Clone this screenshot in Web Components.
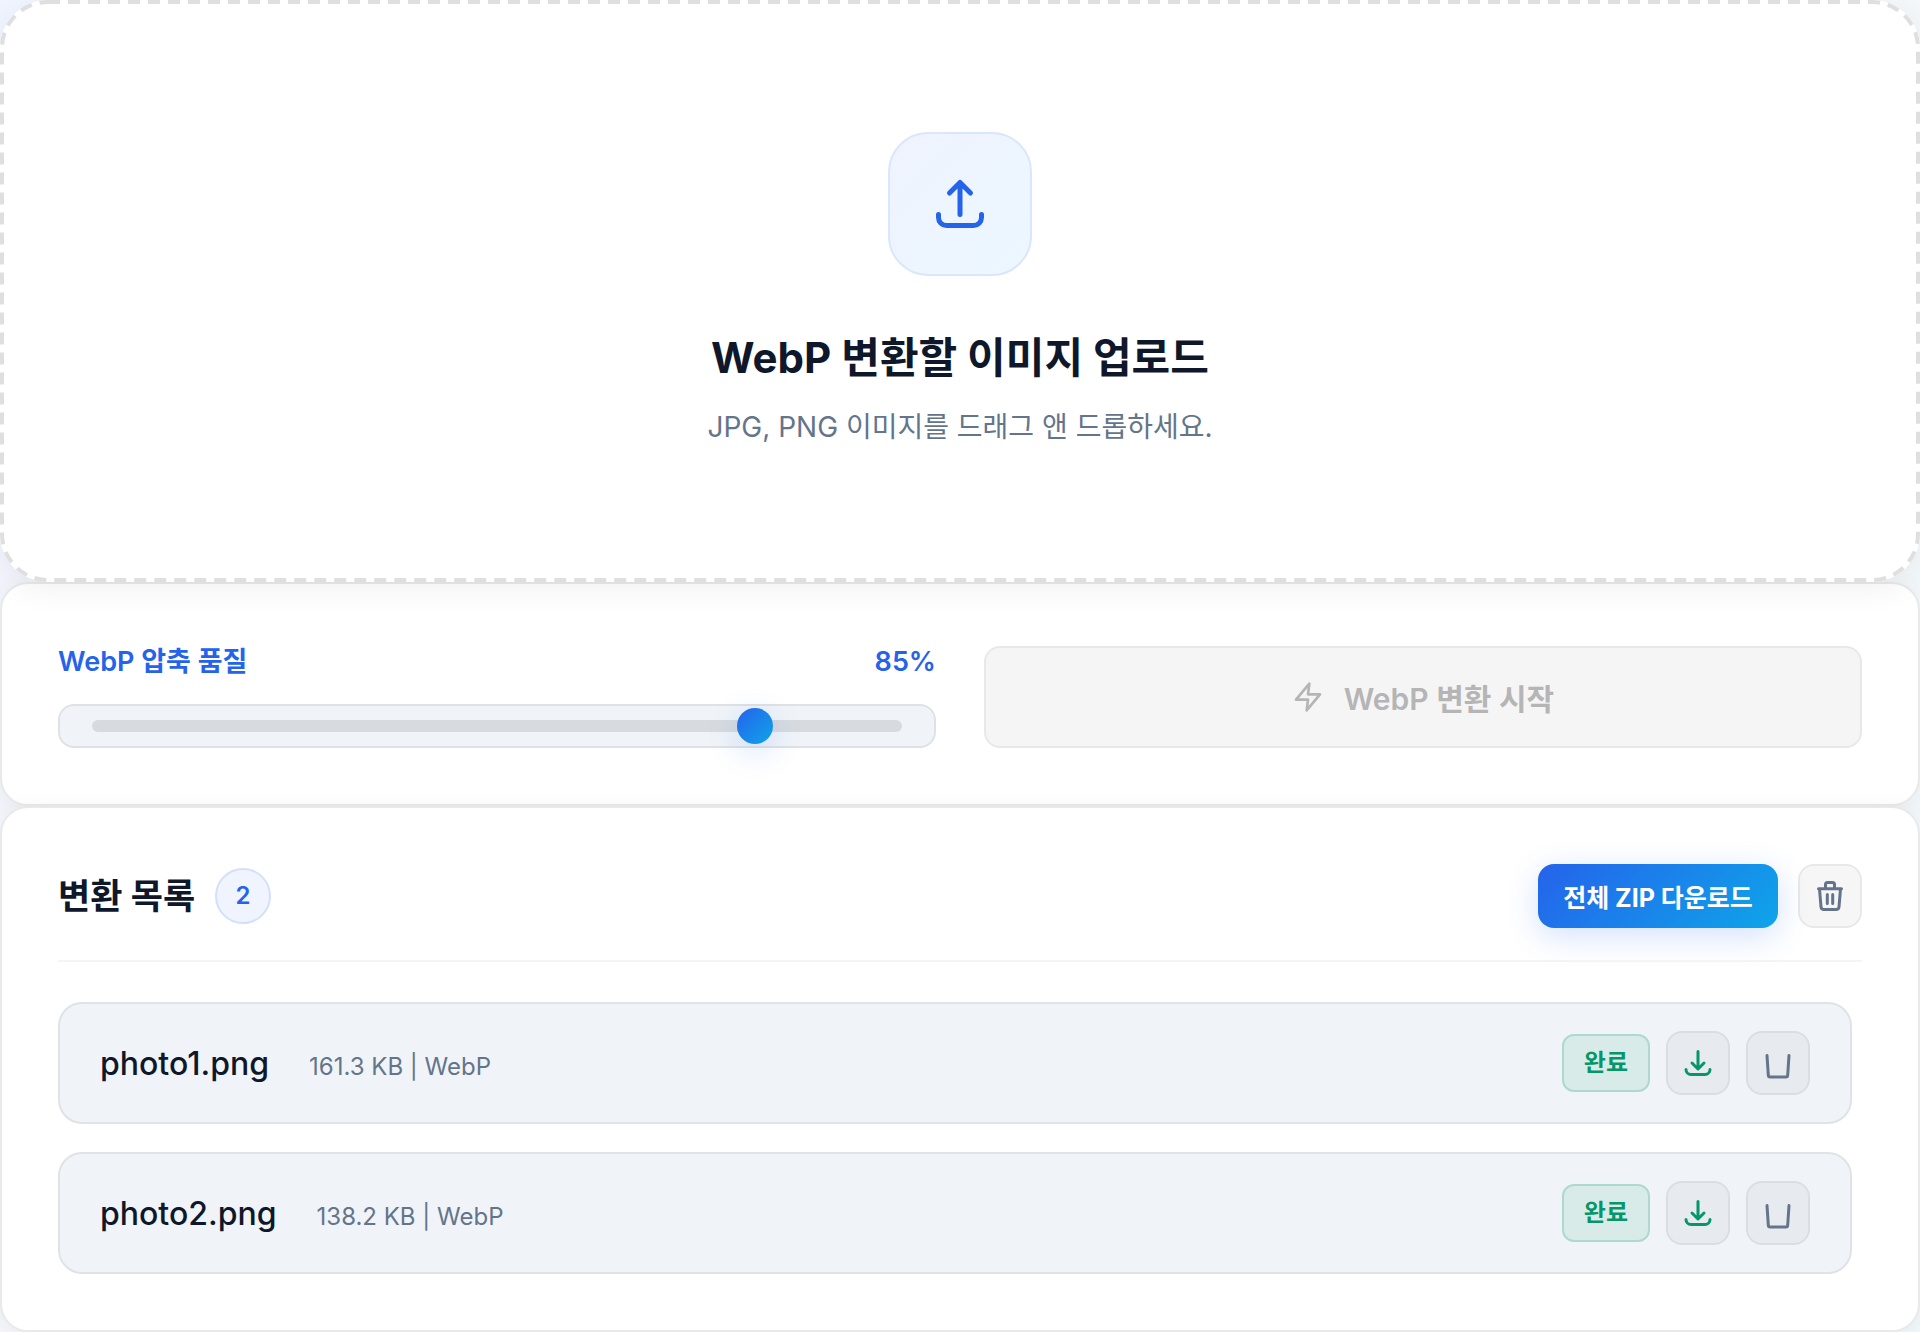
<!DOCTYPE html>
<html lang="ko">
<head>
<meta charset="UTF-8">
<meta name="viewport" content="width=device-width, initial-scale=1">
<title>WebP 변환</title>
<style>
  :root {
    --primary: #2563eb;
    --gradient: linear-gradient(135deg, #2563eb, #0ea5e9);
    --text: #0f172a;
    --muted: #64748b;
    --success: #059669;
    --surface: #f0f4f8;
  }

  body {
    margin: 0;
    min-height: 100vh;
    background: linear-gradient(135deg, #f0f4ff, #f5f7fa 40%, #f0f8fb);
    color: var(--text);
    font-family: Inter, "Noto Sans CJK KR", sans-serif;
  }
</style>
</head>
<body>

<upload-zone>
  <span slot="title">WebP 변환할 이미지 업로드</span>
  <span slot="hint">JPG, PNG 이미지를 드래그 앤 드롭하세요.</span>
</upload-zone>

<panel-card>
  <convert-settings>
    <quality-slider label="WebP 압축 품질" min="10" max="100" value="85"></quality-slider>
    <convert-button>WebP 변환 시작</convert-button>
  </convert-settings>
</panel-card>

<panel-card>
  <file-list label="변환 목록">
    <file-item name="photo1.png" meta="161.3 KB | WebP" status="완료"></file-item>
    <file-item name="photo2.png" meta="138.2 KB | WebP" status="완료"></file-item>
  </file-list>
</panel-card>

<script>
'use strict';

const ICONS = {
  upload: {
    box: 56,
    stroke: 5,
    path: 'M28 38.5v-32M17.5 17 28 6.5 38.5 17M6.5 38.5v3a8 8 0 0 0 8 8h27a8 8 0 0 0 8-8v-3'
  },
  zap: {
    box: 24,
    stroke: 2,
    path: 'M13 2 3 14h9l-1 8 10-12h-9z'
  },
  download: {
    box: 32,
    stroke: 3,
    path: 'M16 4.5v17M10 16l6 6 6-6M4 22.5a5 5 0 0 0 5 5h14a5 5 0 0 0 5-5'
  },
  trash: {
    box: 32,
    stroke: 3,
    path: 'M4.5 8.7h23M11.5 8.5v-4a2 2 0 0 1 2-2h5a2 2 0 0 1 2 2v4M5.5 9 7 26.8a3 3 0 0 0 3 2.7h12a3 3 0 0 0 3-2.7L26.5 9M13.3 14.5v9M18.7 14.5v9'
  },
  bin: {
    box: 32,
    stroke: 3,
    path: 'M5 8.5 6.3 28a2 2 0 0 0 2 2h15.4a2 2 0 0 0 2-2L27 8.5'
  }
};

class AppIcon extends HTMLElement {

  connectedCallback() {
    let icon = ICONS[this.getAttribute('name')];
    let size = this.getAttribute('size') || 32;

    this.attachShadow({mode: 'open'});
    this.shadowRoot.innerHTML = `
      <style>
        :host {
          display: block;
          flex: none;
        }

        svg {
          display: block;
          fill: none;
          stroke: currentColor;
          stroke-linecap: round;
          stroke-linejoin: round;
        }
      </style>
      <svg width="${size}" height="${size}" viewBox="0 0 ${icon.box} ${icon.box}" stroke-width="${icon.stroke}" aria-hidden="true">
        <path d="${icon.path}"/>
      </svg>
    `;
  }

}

class UploadZone extends HTMLElement {

  constructor() {
    super();
    this.attachShadow({mode: 'open'});
    this.shadowRoot.innerHTML = `
      <style>
        /* sits above the next card so the shadow falls onto it */
        :host {
          position: relative;
          z-index: 1;
          display: flex;
          flex-direction: column;
          align-items: center;
          padding: 132px 32px;
          border-radius: 48px;
          background: #fff;
          box-shadow: 0 8px 32px rgba(0, 0, 0, 0.06);
          text-align: center;
        }

        /* dashed outline with longer dashes than border-style gives */
        .outline {
          position: absolute;
          inset: 0;
          width: 100%;
          height: 100%;
          pointer-events: none;
        }

        .outline rect {
          x: 2px;
          y: 2px;
          width: calc(100% - 4px);
          height: calc(100% - 4px);
          rx: 46px;
          fill: none;
          stroke: #dfdfdf;
          stroke-width: 4px;
          stroke-dasharray: 12 8;
        }

        .badge {
          display: grid;
          place-items: center;
          box-sizing: border-box;
          width: 144px;
          height: 144px;
          margin-bottom: 48px;
          border: 2px solid #dae6fb;
          border-radius: 40px;
          background: linear-gradient(135deg, #eff3fd, #ecf7ff);
          color: var(--primary);
        }

        h2 {
          margin: 0 0 12px;
          font-size: 42px;
          font-weight: 700;
          line-height: 68px;
        }

        p {
          margin: 0;
          color: var(--muted);
          font-size: 28px;
          line-height: 46px;
        }
      </style>
      <svg class="outline" aria-hidden="true"><rect/></svg>
      <div class="badge"><app-icon name="upload" size="56"></app-icon></div>
      <h2><slot name="title"></slot></h2>
      <p><slot name="hint"></slot></p>
    `;
  }

}

class PanelCard extends HTMLElement {

  constructor() {
    super();
    this.attachShadow({mode: 'open'});
    this.shadowRoot.innerHTML = `
      <style>
        :host {
          position: relative;
          display: block;
          padding: 56px;
          border: 2px solid #e9e9e9;
          border-radius: 28px;
          background: #fff;
          box-shadow: 0 4px 24px rgba(0, 0, 0, 0.06);
        }
      </style>
      <slot></slot>
    `;
  }

}

class ConvertSettings extends HTMLElement {

  constructor() {
    super();
    this.attachShadow({mode: 'open'});
    this.shadowRoot.innerHTML = `
      <style>
        :host {
          display: grid;
          grid-template-columns: 1fr 1fr;
          align-items: end;
          gap: 48px;
        }
      </style>
      <slot></slot>
    `;
  }

}

class QualitySlider extends HTMLElement {

  connectedCallback() {
    let value = this.getAttribute('value') || 85;
    let min = this.getAttribute('min') || 0;
    let max = this.getAttribute('max') || 100;

    this.attachShadow({mode: 'open'});
    this.shadowRoot.innerHTML = `
      <style>
        :host {
          display: block;
        }

        .head {
          display: flex;
          justify-content: space-between;
          margin-bottom: 20px;
          color: var(--primary);
          font-size: 27px;
          font-weight: 600;
          line-height: 44px;
        }

        input {
          -webkit-appearance: none;
          appearance: none;
          display: block;
          box-sizing: border-box;
          width: 100%;
          height: 44px;
          margin: 0;
          padding: 0 32px;
          border: 2px solid #dfe2e4;
          border-radius: 16px;
          background: var(--surface);
        }

        input::-webkit-slider-runnable-track {
          height: 12px;
          border-radius: 6px;
          background: #d7dbdf;
        }

        input::-webkit-slider-thumb {
          -webkit-appearance: none;
          width: 36px;
          height: 36px;
          margin-top: -12px;
          border-radius: 50%;
          background: var(--gradient);
          box-shadow: 0 8px 32px rgba(37, 99, 235, 0.2);
        }
      </style>
      <div class="head">
        <label for="quality">${this.getAttribute('label')}</label>
        <output for="quality">${value}%</output>
      </div>
      <input type="range" id="quality" min="${min}" max="${max}" value="${value}">
    `;

    let input = this.shadowRoot.querySelector('input');
    let output = this.shadowRoot.querySelector('output');

    input.oninput = () => {
      output.textContent = input.value + '%';
    };
  }

}

class ConvertButton extends HTMLElement {

  constructor() {
    super();
    this.attachShadow({mode: 'open'});
    this.shadowRoot.innerHTML = `
      <style>
        :host {
          display: block;
        }

        button {
          display: flex;
          align-items: center;
          justify-content: center;
          gap: 20px;
          box-sizing: border-box;
          width: 100%;
          height: 102px;
          border: 2px solid #e8e8e8;
          border-radius: 16px;
          background: #f5f5f5;
          color: #b5b5b5;
          font: inherit;
          font-size: 30px;
          font-weight: 600;
        }
      </style>
      <button type="button" disabled>
        <app-icon name="zap"></app-icon>
        <span><slot></slot></span>
      </button>
    `;
  }

}

class IconButton extends HTMLElement {

  connectedCallback() {
    this.attachShadow({mode: 'open'});
    this.shadowRoot.innerHTML = `
      <style>
        :host {
          display: block;
          flex: none;
          color: var(--muted);
        }

        button {
          display: grid;
          place-items: center;
          width: 64px;
          height: 64px;
          padding: 0;
          border: 2px solid rgba(0, 0, 0, 0.06);
          border-radius: 16px;
          background: rgba(0, 0, 0, 0.035);
          color: inherit;
          cursor: pointer;
        }
      </style>
      <button type="button" aria-label="${this.getAttribute('label')}">
        <app-icon name="${this.getAttribute('icon')}"></app-icon>
      </button>
    `;
  }

}

class FileList extends HTMLElement {

  connectedCallback() {
    this.attachShadow({mode: 'open'});
    this.shadowRoot.innerHTML = `
      <style>
        :host {
          display: block;
        }

        header {
          display: flex;
          align-items: center;
          justify-content: space-between;
          margin-bottom: 40px;
          padding-bottom: 32px;
          border-bottom: 2px solid #f5f5f5;
        }

        .group {
          display: flex;
          align-items: center;
          gap: 20px;
        }

        h3 {
          margin: 0;
          font-size: 35px;
          font-weight: 700;
          line-height: 56px;
        }

        .count {
          box-sizing: border-box;
          width: 56px;
          height: 56px;
          border: 2px solid #d3e0fb;
          border-radius: 50%;
          background: #eff4fe;
          color: var(--primary);
          font-size: 24px;
          font-weight: 600;
          line-height: 52px;
          text-align: center;
        }

        .zip {
          min-width: 240px;
          height: 64px;
          padding: 0 24px;
          border: 0;
          border-radius: 16px;
          background: var(--gradient);
          box-shadow: 0 8px 32px rgba(37, 99, 235, 0.2);
          color: #fff;
          font: inherit;
          font-size: 25px;
          font-weight: 700;
          cursor: pointer;
        }

        .items {
          display: flex;
          flex-direction: column;
          gap: 28px;
          padding-right: 10px;
        }
      </style>
      <header>
        <div class="group">
          <h3>${this.getAttribute('label')}</h3>
          <span class="count">${this.querySelectorAll('file-item').length}</span>
        </div>
        <div class="group">
          <button type="button" class="zip">전체 ZIP 다운로드</button>
          <icon-button icon="trash" label="전체 삭제"></icon-button>
        </div>
      </header>
      <div class="items"><slot></slot></div>
    `;
  }

}

class FileItem extends HTMLElement {

  connectedCallback() {
    this.attachShadow({mode: 'open'});
    this.shadowRoot.innerHTML = `
      <style>
        :host {
          display: flex;
          align-items: center;
          justify-content: space-between;
          padding: 27px 40px;
          border: 2px solid #dfe3e5;
          border-radius: 24px;
          background: var(--surface);
        }

        .info {
          display: flex;
          align-items: baseline;
          gap: 40px;
        }

        .name {
          font-size: 32px;
          font-weight: 500;
        }

        .meta {
          color: var(--muted);
          font-size: 24px;
        }

        .actions {
          display: flex;
          align-items: center;
          gap: 16px;
        }

        .status {
          padding: 0 20px;
          border: 2px solid #addace;
          border-radius: 12px;
          background: #d9ebe9;
          color: var(--success);
          font-size: 24px;
          font-weight: 700;
          line-height: 54px;
        }

        .download {
          color: var(--success);
        }
      </style>
      <div class="info">
        <span class="name">${this.getAttribute('name')}</span>
        <span class="meta">${this.getAttribute('meta')}</span>
      </div>
      <div class="actions">
        <span class="status">${this.getAttribute('status')}</span>
        <icon-button class="download" icon="download" label="다운로드"></icon-button>
        <icon-button icon="bin" label="삭제"></icon-button>
      </div>
    `;
  }

}

customElements.define('app-icon', AppIcon);
customElements.define('icon-button', IconButton);
customElements.define('upload-zone', UploadZone);
customElements.define('panel-card', PanelCard);
customElements.define('convert-settings', ConvertSettings);
customElements.define('quality-slider', QualitySlider);
customElements.define('convert-button', ConvertButton);
customElements.define('file-list', FileList);
customElements.define('file-item', FileItem);
</script>

</body>
</html>
